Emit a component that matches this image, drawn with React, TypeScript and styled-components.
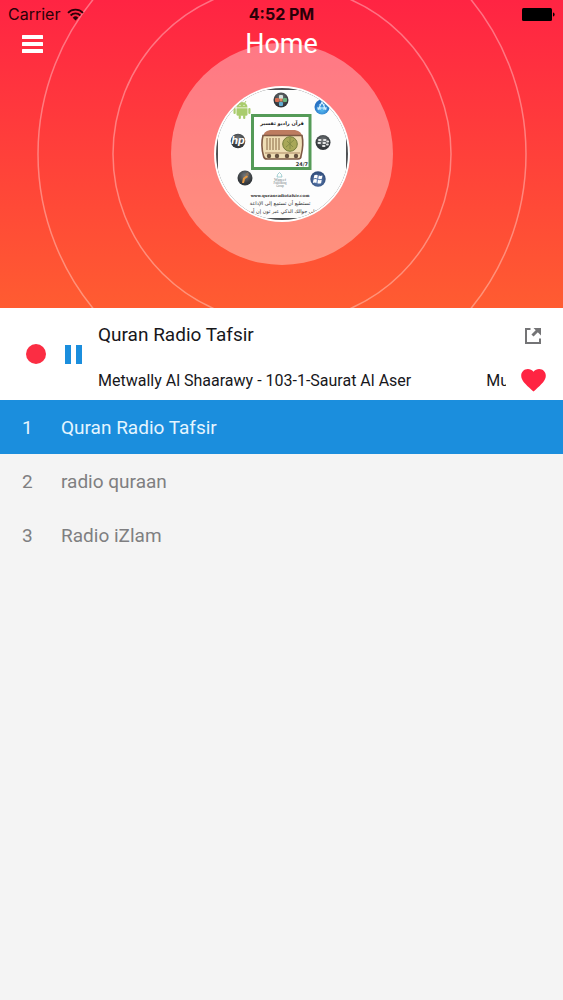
import React from "react";
import styled, { createGlobalStyle } from "styled-components";

const GlobalStyle = createGlobalStyle`
  * { box-sizing: border-box; }
  html, body { margin: 0; background: #f4f4f4; }
  body { font-family: Roboto, "Liberation Sans", sans-serif; color: #17171b; }
  button { font: inherit; color: inherit; background: none; border: 0; padding: 0; margin: 0; cursor: pointer; }
  svg { display: block; }
`;

const Page = styled.div`
  min-height: 100vh;
  background: #f4f4f4;
`;

const Hero = styled.header`
  position: relative;
  overflow: hidden;
  padding-bottom: 86px;
  background: linear-gradient(#ff2443, #ff5c31);
`;

const Rings = styled.svg`
  position: absolute;
  top: 0;
  left: 50%;
  transform: translateX(-50%);
`;

const StatusBar = styled.div`
  position: relative;
  display: grid;
  grid-template-columns: 1fr auto 1fr;
  align-items: center;
  height: 28px;
  padding: 0 8px;
  font-family: Inter, Roboto, sans-serif;
  font-size: 16px;
  line-height: 20px;
  color: #2b0008;
`;

const Carrier = styled.div`
  display: flex;
  align-items: center;
  gap: 7px;
`;

const Clock = styled.time`
  font-weight: 700;
`;

const Battery = styled.svg`
  justify-self: end;
`;

const NavBar = styled.nav`
  position: relative;
  display: grid;
  grid-template-columns: 1fr auto 1fr;
  align-items: center;
  height: 32px;
  padding: 0 22px;
  color: #fff;
`;

const MenuButton = styled.button`
  justify-self: start;
`;

const Title = styled.h1`
  margin: 0;
  font-size: 27px;
  line-height: 32px;
  font-weight: 400;
`;

const Cover = styled.div`
  position: relative;
  display: flex;
  justify-content: center;
  padding-top: 26px;
`;

const Player = styled.section`
  display: flex;
  align-items: center;
  height: 92px;
  padding: 0 17px 0 26px;
  background: #fff;
`;

const Controls = styled.div`
  display: flex;
  align-items: center;
  gap: 19px;
  width: 72px;
`;

const Info = styled.div`
  flex: 1;
  min-width: 0;
  display: flex;
  flex-direction: column;
  gap: 22px;
  padding-top: 8px;
`;

const Station = styled.h2`
  margin: 0;
  font-size: 19px;
  line-height: 24px;
  font-weight: 400;
`;

const Marquee = styled.div`
  display: flex;
  gap: 75px;
  overflow: hidden;
  white-space: nowrap;
  font-size: 16px;
  line-height: 24px;
`;

const Actions = styled.div`
  display: flex;
  flex-direction: column;
  align-items: center;
  gap: 20px;
  width: 26px;
  margin-left: 14px;
  padding-top: 8px;
`;

const StationList = styled.ol`
  margin: 0;
  padding: 0;
  list-style: none;
`;

const StationButton = styled.button<{ $active?: boolean }>`
  display: flex;
  align-items: center;
  width: 100%;
  height: 54px;
  padding: 1px 22px 0;
  font-size: 19px;
  line-height: 24px;
  text-align: left;
  color: ${(p) => (p.$active ? "#e4f5ff" : "#7f7f81")};
  background: ${(p) => (p.$active ? "#1b8edd" : "transparent")};
`;

const Index = styled.span`
  width: 39px;
`;

const stations = ["Quran Radio Tafsir", "radio quraan", "Radio iZlam"];

function CoverArt() {
  return (
    <svg width="136" height="136" viewBox="0 0 136 136" role="img" aria-label="Quran Radio Tafsir cover">
      <defs>
        <clipPath id="disc"><circle cx="68" cy="68" r="66" /></clipPath>
        <radialGradient id="dark" cx="50%" cy="35%"><stop offset="0" stopColor="#777b7e" /><stop offset="1" stopColor="#34383c" /></radialGradient>
        <radialGradient id="sky" cx="50%" cy="70%"><stop offset="0" stopColor="#55baf2" /><stop offset="1" stopColor="#2873c4" /></radialGradient>
        <radialGradient id="navy" cx="50%" cy="60%"><stop offset="0" stopColor="#6788bb" /><stop offset="1" stopColor="#34507f" /></radialGradient>
      </defs>
      <circle cx="68" cy="68" r="68" fill="#fff" />
      <g clipPath="url(#disc)">
        <rect width="136" height="136" fill="#4e5053" />
        <rect x="4" y="4" width="128" height="128" fill="#fdfdfd" />

        <circle cx="67" cy="14" r="7.5" fill="url(#dark)" />
        <rect x="65" y="9" width="4" height="4" rx="1" fill="#d3e0dc" />
        <rect x="61" y="12" width="4" height="4" rx="1" fill="#d66e52" />
        <rect x="69" y="12" width="4" height="4" rx="1" fill="#67b37d" />
        <rect x="65" y="16" width="4" height="4" rx="1" fill="#62add2" />
        <rect x="65.5" y="12.5" width="3" height="3" fill="#e08a60" />

        <circle cx="108" cy="21" r="7.5" fill="url(#sky)" />
        <path d="M104 24l4-8 4 8M103 22h10M106 18v6M110 18v6" fill="none" stroke="#d5f0ff" strokeWidth="1.1" />

        <g fill="#a9cc6d">
          <path d="M22.5 21.500a5.500 5.500 0 0 1 11 0z" />
          <path d="M24 15l2 3M32 15l-2 3" stroke="#a9cc6d" strokeWidth="1" />
          <path d="M22.500 22.300h11v6a1.500 1.500 0 0 1-1.500 1.500h-8a1.500 1.500 0 0 1-1.500-1.500z" />
          <rect x="19.500" y="22" width="2.200" height="6" rx="1.100" />
          <rect x="34.300" y="22" width="2.200" height="6" rx="1.100" />
          <rect x="24.700" y="29" width="2.200" height="4" rx="1" />
          <rect x="29.100" y="29" width="2.200" height="4" rx="1" />
        </g>
        <circle cx="26" cy="19.300" r=".6" fill="#fff" />
        <circle cx="30" cy="19.300" r=".6" fill="#fff" />

        <circle cx="24" cy="55" r="7.300" fill="url(#dark)" />
        <text x="24" y="58" textAnchor="middle" fontFamily="Liberation Sans, sans-serif" fontSize="11" fontStyle="italic" fontWeight="700" fill="#fff">hp</text>

        <circle cx="109" cy="56.500" r="7.500" fill="url(#dark)" />
        <g fill="#e4e4e4">
          <rect x="104" y="53" width="3.500" height="2" rx="1" /><rect x="109" y="53" width="3.500" height="2" rx="1" />
          <rect x="103.500" y="56" width="3.500" height="2" rx="1" /><rect x="108.500" y="56" width="3.500" height="2" rx="1" />
          <rect x="112.300" y="54.600" width="2.800" height="2" rx="1" /><rect x="108" y="59" width="3.500" height="2" rx="1" />
          <rect x="112" y="57.600" width="2.800" height="2" rx="1" />
        </g>

        <circle cx="31" cy="92" r="7.500" fill="url(#dark)" />
        <path d="M28 97l1-5 4-3 1 2-3 2-1 4z" fill="#e59a45" />
        <path d="M31 88l3-2 1 3-2 1z" fill="#86715b" />

        <circle cx="104" cy="93" r="7.700" fill="url(#navy)" />
        <g fill="#fff">
          <path d="M100.300 89.200q2-1 3.500 0l-.6 3.300q-1.700-.8-3.500 0z" />
          <path d="M104.800 89.500q1.700.8 3.700-.1l-.6 3.400q-1.800.8-3.700 0z" />
          <path d="M99.500 93.500q1.800-.9 3.500 0l-.6 3.400q-1.700-.9-3.500 0z" />
          <path d="M104 93.800q1.800.8 3.700 0l-.6 3.400q-1.900.8-3.700 0z" />
        </g>

        <rect x="38.500" y="29.500" width="57.500" height="53" fill="#fff" stroke="#559b58" strokeWidth="3" />
        <text x="68" y="39" textAnchor="middle" direction="rtl" fontFamily="DejaVu Sans, sans-serif" fontSize="5" fontWeight="700" fill="#222">قرآن راديو تفسير</text>

        <path d="M49 52q0-7 7-8h25q7 1 7.500 8z" fill="#bd7c60" />
        <path d="M49 49.500h39q2 9-1 20.500 0 3-3 3h-31q-3 0-3.500-3-3-11-.5-20.500z" fill="#efdeb5" stroke="#7e5944" strokeWidth="1.600" />
        <path d="M53 52v12M56 52v12M59 52v12M62 52v12M65 52v12" stroke="#a0835f" strokeWidth="1.300" />
        <circle cx="76" cy="58" r="7.300" fill="#a8a758" stroke="#747c3c" strokeWidth="1" />
        <path d="M72 61l8-7M73 55l6 6M76 52v11" stroke="#7e8743" strokeWidth=".8" />
        <path d="M51 67h35" stroke="#ad8964" strokeWidth="1" />
        <g fill="#665240"><circle cx="55" cy="70" r="2.200" /><circle cx="63" cy="70" r="2.200" /><circle cx="73" cy="70" r="2.200" /><circle cx="82" cy="70" r="2.200" /></g>
        <text x="94" y="80" textAnchor="end" fontFamily="DejaVu Sans, sans-serif" fontSize="5" fontWeight="700" fill="#333">24/7</text>

        <path d="M63 91q0-3 2.500-4.500Q68 88 68 91z" fill="none" stroke="#8bc3c7" strokeWidth=".8" />
        <g textAnchor="middle" fontFamily="Liberation Serif, serif" fill="#6b7779">
          <text x="66" y="95" fontSize="4">Waqeef</text>
          <text x="66" y="98" fontSize="3">Publishing</text>
          <text x="66" y="101" fontSize="3">Group</text>
        </g>
        <text x="66" y="111" textAnchor="middle" fontFamily="DejaVu Serif, serif" fontSize="4" fontWeight="700" fill="#333">www.quranradiotafsir.com</text>
        <g textAnchor="middle" direction="rtl" fontFamily="DejaVu Sans, sans-serif" fontSize="5" fill="#2c2c2e">
          <text x="66" y="119">تستطيع أن تستمع إلى الإذاعة</text>
          <text x="67" y="127">على جوالك الذكي عبر تون إن أو ث</text>
        </g>
      </g>
    </svg>
  );
}

export default function App() {
  return (
    <Page>
      <GlobalStyle />
      <Hero>
        <Rings width="490" height="400" viewBox="-245 -154 490 400" aria-hidden="true">
          <circle r="244" fill="none" stroke="#fff" strokeOpacity=".35" strokeWidth="1.500" />
          <circle r="169" fill="none" stroke="#fff" strokeOpacity=".35" strokeWidth="1.500" />
          <circle r="111" fill="#fff" fillOpacity=".36" />
        </Rings>
        <StatusBar>
          <Carrier>
            Carrier
            <svg width="17" height="13" viewBox="0 0 17 13" aria-label="Wi-Fi">
              <path d="M1 4.800a10.600 10.600 0 0 1 15 0M3.600 7.500a6.900 6.900 0 0 1 9.800 0" fill="none" stroke="currentColor" strokeWidth="1.800" />
              <path d="M8.500 12.500L5.700 9.700a4 4 0 0 1 5.600 0z" fill="currentColor" />
            </svg>
          </Carrier>
          <Clock>4:52 PM</Clock>
          <Battery width="33" height="13" viewBox="0 0 33 13" aria-label="Battery full">
            <rect width="30" height="13" rx="1.500" fill="#000" />
            <path d="M31 4.500q1.600.2 1.600 2t-1.600 2z" fill="#000" />
          </Battery>
        </StatusBar>
        <NavBar>
          <MenuButton aria-label="Menu">
            <svg width="21" height="18" viewBox="0 0 21 18" fill="currentColor">
              <rect width="21" height="4" rx=".5" />
              <rect y="7" width="21" height="4" rx=".5" />
              <rect y="14" width="21" height="4" rx=".5" />
            </svg>
          </MenuButton>
          <Title>Home</Title>
        </NavBar>
        <Cover><CoverArt /></Cover>
      </Hero>
      <Player>
        <Controls>
          <button aria-label="Record">
            <svg width="20" height="20" viewBox="0 0 20 20"><circle cx="10" cy="10" r="10" fill="#fb2d43" /></svg>
          </button>
          <button aria-label="Pause">
            <svg width="17" height="19" viewBox="0 0 17 19" fill="#1b8edd"><rect width="6" height="19" /><rect x="11" width="6" height="19" /></svg>
          </button>
        </Controls>
        <Info>
          <Station>Quran Radio Tafsir</Station>
          <Marquee>
            <span>Metwally Al Shaarawy - 103-1-Saurat Al Aser</span>
            <span>Music</span>
          </Marquee>
        </Info>
        <Actions>
          <button aria-label="Share">
            <svg width="16" height="24" viewBox="0 0 16 24" fill="none" stroke="#747476" strokeWidth="2">
              <path d="M5.500 5H1v14h14v-4.500" />
              <path d="M7.500 11.500l5-5" strokeWidth="3" />
              <path d="M8.500 4H16v7.500z" fill="#747476" stroke="none" />
            </svg>
          </button>
          <button aria-label="Favourite">
            <svg width="25" height="24" viewBox="0 0 25 24">
              <path d="M12.500 23.500L10.700 21.900C4.300 16.100.2 12.300.2 7.700.2 4 3.100 1.100 6.900 1.100c2.100 0 4.200 1 5.600 2.600 1.400-1.600 3.500-2.600 5.600-2.600 3.800 0 6.700 2.900 6.700 6.600 0 4.600-4.100 8.400-10.500 14.200z" fill="#ff2442" />
            </svg>
          </button>
        </Actions>
      </Player>
      <StationList>
        {stations.map((name, i) => (
          <li key={name}>
            <StationButton $active={i === 0} aria-current={i === 0 ? "true" : undefined}>
              <Index>{i + 1}</Index>
              {name}
            </StationButton>
          </li>
        ))}
      </StationList>
    </Page>
  );
}
